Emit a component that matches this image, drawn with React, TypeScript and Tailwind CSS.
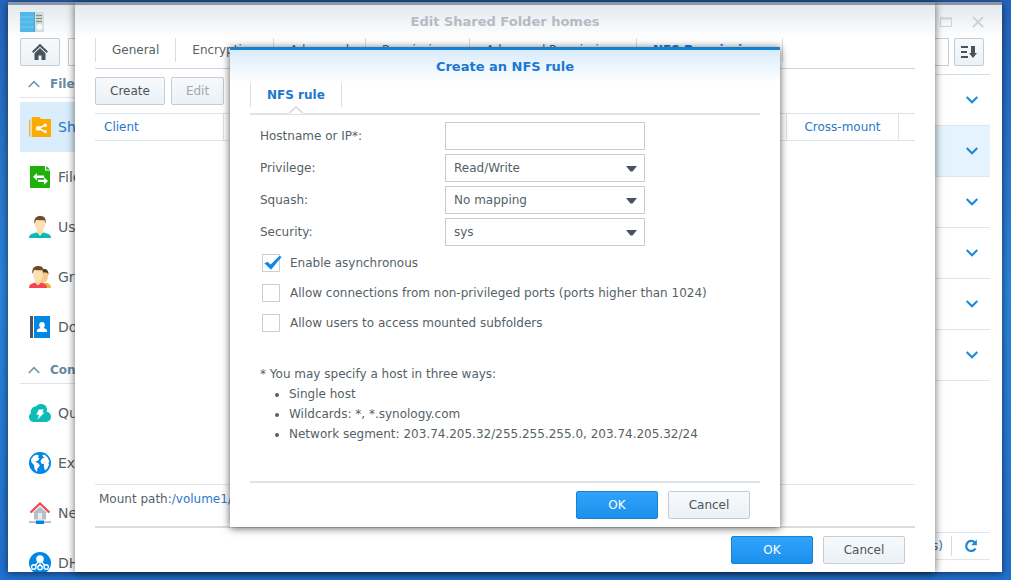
import { useState } from 'react'
import type { ReactNode } from 'react'
import clsx from 'clsx'

const ShareIcon = () => (
  <svg width="22" height="22" viewBox="0 0 22 22">
    <path d="M0 3.500h1.400v17H0z" fill="#fbb116" />
    <path d="M2.800 1h7.700l1.500 2h10v18H2.800z" fill="#fbab00" />
    <path d="M17 8.800 9.400 12.400 17 16" fill="none" stroke="#fff" strokeWidth="1.500" />
    <circle cx="9.200" cy="12.400" r="2.400" fill="#fff" />
    <circle cx="16.200" cy="9.200" r="1.700" fill="#fff" />
    <circle cx="16.200" cy="15.600" r="1.700" fill="#fff" />
  </svg>
)

const FileIcon = () => (
  <svg width="22" height="22" viewBox="0 0 22 22">
    <path d="M1 0h15v4.600h5V22H1z" fill="#1fb00b" />
    <path d="M17.200 0 21 3.600h-3.800z" fill="#1fb00b" />
    <path d="M4 10.800 8 7v2.600h7v2.400H8v2.600zM19 15l-4-3.800v2.600H9V16h6v2.800z" fill="#fff" />
  </svg>
)

const UserIcon = () => (
  <svg width="22" height="22" viewBox="0 0 22 22">
    <path d="M0 22c0-3 2-4.400 7.500-5.500h7C20 17.600 22 19 22 22z" fill="#09bdb7" />
    <path d="M8 12h6v4.500l-3 3.500-3-3.500z" fill="#f9d9a8" />
    <path d="M6.200 4h9.600v4.500c0 4-2 6.500-4.800 6.500s-4.800-2.500-4.800-6.500z" fill="#fbe0b4" />
    <path d="M5.500 8C4.600 2.500 7 0 11.500 0 16 0 17.400 3 16.500 8l-1-3.800c-2.500.4-6-.2-8.500-.2z" fill="#6f4a2b" />
  </svg>
)

const GroupIcon = () => (
  <svg width="22" height="22" viewBox="0 0 22 22">
    <path d="M14 17h4.500c2 .8 3.500 2 3.500 5h-6z" fill="#efb33c" />
    <path d="M12 6h7v5c0 3-2 5-4 5.500V18h-3z" fill="#f6c98c" />
    <path d="M12 4c3-2 8-1.500 7.500 5l-1.300-2.300L13 6z" fill="#4d3826" />
    <path d="M0 22c0-3 1.500-4.400 6.500-5.500h5C16.500 17.600 18 19 18 22z" fill="#f24750" />
    <path d="M6 12h6v4.500l-3 3-3-3z" fill="#f9d9a8" />
    <path d="M4.200 4h9.600v4.500c0 4-2 6.500-4.800 6.500s-4.800-2.500-4.800-6.500z" fill="#fbe0b4" />
    <path d="M3.500 8C2.600 2.500 5 0 9.500 0 14 0 15.400 3 14.500 8l-1-3.800C11 4.600 7.500 4 5 4z" fill="#6f4a2b" />
  </svg>
)

const DomainIcon = () => (
  <svg width="22" height="22" viewBox="0 0 22 22">
    <path d="M1 0h3v22H1z" fill="#4b5660" />
    <path d="M5 0h16v22H5z" fill="#0086e5" />
    <path d="M8 16v-1.500c0-1.200 1.500-1.700 3.600-2.400-1-1-1.400-2-1.400-3.200 0-1.700 1-2.900 2.800-2.900s2.800 1.200 2.800 2.900c0 1.200-.4 2.200-1.400 3.200 2.100.7 3.600 1.200 3.600 2.400V16z" fill="#fff" />
  </svg>
)

const QuickConnectIcon = () => (
  <svg width="22" height="22" viewBox="0 0 22 22">
    <path d="M5 20a5 5 0 0 1-3.200-8.800C1.200 7 4 4.600 7 4.600 8 2.800 10 2 12 2c3.600 0 6 2.200 6 5.600 0 .8-.2 1.500-.4 2C20.500 10.200 22 12.300 22 14.800 22 17.800 19.800 20 17 20z" fill="#0cbcb5" />
    <path d="M9.800 7.500h5l-1.600 3h2.300l-7 7 1.600-4.700H7.200z" fill="#fff" />
  </svg>
)

const GlobeIcon = () => (
  <svg width="22" height="22" viewBox="0 0 22 22">
    <circle cx="11" cy="11" r="11" fill="#0086e5" />
    <path d="M2 7.500 4.500 4l3-1.500 2.500 1-1 2 1.500 1.300L8.500 9 6 9.500l3.500 2 1.500 2-2.500 3L8 20l-2.500-3-.5-4-2.500-2.500z" fill="#fff" />
    <path d="M13 3.500 15.500 2.500l3.300 3.200 1.700 4.300-1.200.8.800 1.700-1.800 4L16 18.500l-1.200-4 .3-2.300-2.800-.7-.9-2.500 2-2.800 2-.5z" fill="#fff" />
  </svg>
)

const NetworkIcon = () => (
  <svg width="22" height="22" viewBox="0 0 22 22">
    <path d="M11 4.500 18.500 11H17v6.500H5V11H3.500z" fill="#b9bfc6" />
    <path d="M9 11h4v6.500H9z" fill="#e9edf0" />
    <path d="M1.500 10.500 11 1.500l9.500 9" fill="none" stroke="#f24750" strokeWidth="2.200" />
    <path d="M0 19.500h22v1.200H0z" fill="#8e979f" />
    <path d="M7 18.500h8V22H7z" fill="#0086e5" />
  </svg>
)

const DhcpIcon = () => (
  <svg width="22" height="22" viewBox="0 0 22 22">
    <circle cx="11" cy="11" r="11" fill="#0086e5" />
    <circle cx="11" cy="7" r="3.800" fill="#fff" />
    <path d="M11 9v6M10 9l-5 6M12 9l5 6" stroke="#fff" strokeWidth="1.200" />
    <g fill="#0086e5" stroke="#fff" strokeWidth="1.400">
      <circle cx="4.800" cy="15" r="2.200" />
      <circle cx="11" cy="15.500" r="2.200" />
      <circle cx="17.200" cy="15" r="2.200" />
    </g>
  </svg>
)

const Chevron = ({ up }: { up?: boolean }) => (
  <svg width="12" height="8" viewBox="0 0 12 8" fill="none" strokeWidth={up ? 1.6 : 2} stroke={up ? '#7595ad' : '#1b87d6'}>
    <path d={up ? 'M0.700 7 6 1.700 11.300 7' : 'M0.700 1 6 6.300 11.300 1'} />
  </svg>
)

const sections = [
  {
    title: 'File Sharing',
    items: [
      { label: 'Shared Folder', icon: <ShareIcon />, active: true },
      { label: 'File Services', icon: <FileIcon /> },
      { label: 'User', icon: <UserIcon /> },
      { label: 'Group', icon: <GroupIcon /> },
      { label: 'Domain/LDAP', icon: <DomainIcon /> },
    ],
  },
  {
    title: 'Connectivity',
    items: [
      { label: 'QuickConnect', icon: <QuickConnectIcon /> },
      { label: 'External Access', icon: <GlobeIcon /> },
      { label: 'Network', icon: <NetworkIcon /> },
      { label: 'DHCP Server', icon: <DhcpIcon /> },
    ],
  },
]

const folders = ['docker', 'homes', 'music', 'photo', 'video', 'web']

const tabs = ['General', 'Encryption', 'Advanced', 'Permissions', 'Advanced Permissions', 'NFS Permissions']

function Button({ variant = 'secondary', className, disabled, children }: {
  variant?: 'primary' | 'secondary'
  className?: string
  disabled?: boolean
  children: ReactNode
}) {
  return (
    <button
      type="button"
      disabled={disabled}
      className={clsx(
        'h-7 shrink-0 rounded-xs border text-xs',
        variant === 'primary'
          ? 'border-[#1a80d0] bg-linear-to-b from-[#30a4fc] to-[#1a90ec] text-white'
          : 'border-[#c4ccd6] bg-linear-to-b from-[#f7fafc] to-[#ebf1f6]',
        disabled ? 'text-[#a0a8b2]' : variant === 'secondary' && 'text-[#4a545e]',
        className,
      )}
    >
      {children}
    </button>
  )
}

function SelectRow({ id, label, options }: { id: string; label: string; options: string[] }) {
  return (
    <div className="flex h-7">
      <label htmlFor={id} className="w-[185px] shrink-0 leading-7">{label}</label>
      <div className="relative w-[200px]">
        <select id={id} className="h-7 w-full appearance-none border border-[#c9cdd3] bg-white px-2 text-xs">
          {options.map(o => <option key={o}>{o}</option>)}
        </select>
        <svg className="pointer-events-none absolute top-3 right-2" width="11" height="6" viewBox="0 0 11 6">
          <path d="M0 0h11L6.500 5.500h-2z" fill="#48535e" />
        </svg>
      </div>
    </div>
  )
}

function CheckRow({ label, defaultChecked }: { label: string; defaultChecked?: boolean }) {
  const [checked, setChecked] = useState(!!defaultChecked)
  return (
    <label className="flex h-[30px] items-center gap-[10px] pl-[2px]">
      <span className="relative flex">
        <input
          type="checkbox"
          checked={checked}
          onChange={e => setChecked(e.target.checked)}
          className="size-[18px] appearance-none border border-[#c6cfda] bg-white"
        />
        {checked && (
          <svg className="pointer-events-none absolute top-0 left-0.5" width="18" height="18" viewBox="0 0 18 18">
            <path d="M0.300 9.200 3.600 7.800l3 2.600L15.300 2l2.500.8L7 15.800z" fill="#1489e4" />
          </svg>
        )}
      </span>
      {label}
    </label>
  )
}

function ControlPanel() {
  return (
    <section className="absolute top-0.5 right-[9px] bottom-2 left-2 flex flex-col overflow-hidden border-t-3 border-[#8c96a3] bg-white shadow-[0_1px_8px_rgba(0,0,0,0.6)]">
      <header className="flex h-[33px] shrink-0 items-center justify-between bg-linear-to-b from-[#e4e9ee] to-white pr-[18px] pl-3">
        <svg width="24" height="20" viewBox="0 0 24 20">
          <path d="M0 0h14v20H0z" fill="#52b8ea" />
          <path d="M0 5h14M0 10h14M0 15h14" stroke="#6cc7f2" />
          <path d="M14 0h10v20H14z" fill="#d5dde2" />
          <path d="M14 0h1v20h-1z" fill="#4aa5d6" />
          <path d="M16 3.500h6M16 6.500h6M16 9.500h6" stroke="#718791" />
          <path d="M17 2.500h2v2h-2zM20 5.500h2v2h-2zM17 8.500h2v2h-2z" fill="#8fb562" />
          <circle cx="19.500" cy="15" r="3" fill="#f7fafb" />
        </svg>
        <svg width="44" height="12" viewBox="0 0 44 12" fill="none" stroke="#ced2d6">
          <path d="M0.500 2h11v8.500h-11z" />
          <path d="M0 2.500h12" strokeWidth="2" />
          <path d="M33 1l10 10M43 1 33 11" strokeWidth="1.800" />
        </svg>
      </header>

      <div className="flex h-7 shrink-0 pr-[18px] pl-3">
        <button type="button" aria-label="Home" className="mr-2 flex w-10 items-center justify-center rounded-xs border border-[#c4ccd6] bg-linear-to-b from-[#f7fafc] to-[#ebf1f6]">
          <svg width="16" height="16" viewBox="0 0 16 16">
            <path d="M0.700 8.200 8 1.200l7.300 7" fill="none" stroke="#48535e" strokeWidth="2" />
            <path d="M2.500 9.300 8 4l5.500 5.300V16h-4v-4.500h-3V16h-4z" fill="#48535e" />
          </svg>
        </button>
        <input aria-label="Search" className="mr-[5px] min-w-0 flex-1 border border-[#c6ccd4]" />
        <button type="button" aria-label="Sort" className="flex w-[30px] items-center justify-center rounded-xs border border-[#c4ccd6] bg-linear-to-b from-[#f7fafc] to-[#ebf1f6]">
          <svg width="16" height="12" viewBox="0 0 16 12" fill="#48535e">
            <path d="M0 0h7v2H0zM0 5h6v2H0zM0 10h7v2H0zM10 0h4v7h2l-4 5-4-5h2z" />
          </svg>
        </button>
      </div>

      <div className="flex min-h-0 flex-1 px-3">
        <nav className="w-[220px] shrink-0 overflow-hidden">
          {sections.map(section => (
            <div key={section.title}>
              <h2 className="mb-1 flex h-8 items-center gap-[10px] border-b border-[#dfe5ea] pt-1 pl-2 text-xs font-bold text-[#6688a3]">
                <Chevron up />
                {section.title}
              </h2>
              {section.items.map(item => (
                <a
                  key={item.label}
                  href="#"
                  className={clsx('flex h-[50px] items-center gap-[7px] pl-[9px] text-sm', item.active && 'bg-[#d9edfc] text-[#2a78cc]')}
                >
                  {item.icon}
                  {item.label}
                </a>
              ))}
            </div>
          ))}
        </nav>

        <div className="flex min-w-0 flex-1 flex-col pt-2 pb-3">
          <div className="flex-1 border-t border-[#d3dde6]">
            {folders.map(name => (
              <button
                key={name}
                type="button"
                aria-label={`Expand ${name}`}
                className={clsx('flex h-[51px] w-full items-center justify-end border-b border-[#dfe5ea] pr-3', name === 'homes' && 'bg-[#e4f3fe]')}
              >
                <Chevron />
              </button>
            ))}
          </div>
          <footer className="flex h-7 shrink-0 items-center justify-end border-y border-[#dfe5ea] text-[#3d6ea8]">
            <span className="pr-2">6 item(s)</span>
            <button type="button" aria-label="Refresh" className="flex h-5 w-[39px] items-center justify-center border-l border-[#d3dde6]">
              <svg width="14" height="14" viewBox="0 0 14 14">
                <path d="M11.500 9.500A5 5 0 1 1 10.800 3.500" fill="none" stroke="#1b87d6" strokeWidth="2.200" />
                <path d="M12.800 0.500v5.700H7.200z" fill="#1b87d6" />
              </svg>
            </button>
          </footer>
        </div>
      </div>
    </section>
  )
}

function SharedFolderDialog() {
  return (
    <section className="absolute top-0.5 right-[76px] bottom-2 left-[75px] flex flex-col border-t-3 border-[#8c96a3] bg-white px-5 shadow-[0_1px_8px_rgba(0,0,0,0.6)]">
      <header className="-mx-5 flex h-[33px] shrink-0 items-center justify-center bg-linear-to-b from-[#e4e9ee] to-white text-[13px] font-bold text-[#b4bbc3]">
        Edit Shared Folder homes
      </header>

      <div role="tablist" className="flex h-[31px] shrink-0 border-b border-[#cdd2d8] pb-1.5">
        {tabs.map(tab => (
          <button
            key={tab}
            type="button"
            role="tab"
            aria-selected={tab === 'NFS Permissions'}
            className={clsx('border-l border-[#d8dde2] px-4 whitespace-nowrap last:border-r', tab === 'NFS Permissions' && 'font-bold text-[#1a78d0]')}
          >
            {tab}
          </button>
        ))}
      </div>

      <div className="flex shrink-0 gap-1.5 py-2">
        <Button className="w-[70px]">Create</Button>
        <Button className="w-[53px]" disabled>Edit</Button>
      </div>

      <div className="flex-1">
        <table className="w-full table-fixed border-separate border-spacing-0 text-[#2a78cc]">
          <thead>
            <tr className="h-7 [&>th]:border-y [&>th]:border-[#d9e4ec] [&>th]:font-normal">
              <th className="w-[129px] border-r pl-[9px] text-left">Client</th>
              <th className="border-r">Privilege</th>
              <th className="border-r">Squash</th>
              <th className="w-[112px] border-r">Cross-mount</th>
              <td className="w-4 border-y border-[#d9e4ec]" />
            </tr>
          </thead>
        </table>
      </div>

      <p className="h-11 shrink-0 border-t border-b-2 border-t-[#e2e6ea] border-b-[#dadcdf] pl-1 leading-7">
        Mount path:<span className="text-[#2a78cc]">/volume1/homes</span>
      </p>
      <footer className="flex shrink-0 justify-end gap-[10px] py-2 pr-[10px]">
        <Button variant="primary" className="w-[82px]">OK</Button>
        <Button className="w-[82px]">Cancel</Button>
      </footer>

      <NfsRuleDialog />
    </section>
  )
}

function NfsRuleDialog() {
  return (
    <section className="absolute inset-x-[155px] top-[42px] flex flex-col border-t-3 border-[#1580d2] bg-white px-5 shadow-[0_1px_8px_rgba(0,0,0,0.65)]">
      <header className="-mx-5 flex h-[33px] items-center justify-center bg-linear-to-b from-[#d9ecfb] to-white text-[13px] font-bold text-[#1a78d0]">
        Create an NFS rule
      </header>

      <div role="tablist" className="flex h-8 border-b-2 border-[#dfe1e3] pb-1.5">
        <button type="button" role="tab" aria-selected className="relative border-x border-[#d8dde2] px-4 font-bold text-[#1a78d0]">
          NFS rule
          <svg className="absolute -bottom-[7px] left-1/2 -ml-[7px]" width="14" height="8" viewBox="0 0 14 8">
            <path d="M0.500 7 7 1l6.500 6v1H0.500z" fill="#fff" />
            <path d="M0.500 7 7 1l6.500 6" fill="none" stroke="#d3d7da" strokeWidth="1.500" />
          </svg>
        </button>
      </div>

      <form className="px-[10px] pt-[7px]">
        <div className="flex flex-col gap-1">
          <div className="flex h-7">
            <label htmlFor="host" className="w-[185px] shrink-0 leading-7">Hostname or IP*:</label>
            <input id="host" className="w-[200px] border border-[#c9cdd3] bg-white px-2 text-xs" />
          </div>
          <SelectRow id="privilege" label="Privilege:" options={['Read/Write', 'Read-only']} />
          <SelectRow id="squash" label="Squash:" options={['No mapping', 'Map root to admin']} />
          <SelectRow id="security" label="Security:" options={['sys', 'krb5']} />
        </div>

        <div className="pt-0.5">
          <CheckRow label="Enable asynchronous" defaultChecked />
          <CheckRow label="Allow connections from non-privileged ports (ports higher than 1024)" />
          <CheckRow label="Allow users to access mounted subfolders" />
        </div>

        <div className="pt-[26px] leading-5">
          <p>* You may specify a host in three ways:</p>
          <ul className="list-disc pl-[29px]">
            <li>Single host</li>
            <li>Wildcards: *, *.synology.com</li>
            <li>Network segment: 203.74.205.32/255.255.255.0, 203.74.205.32/24</li>
          </ul>
        </div>
      </form>

      <footer className="mt-[37px] flex justify-end gap-[10px] border-t-2 border-[#dfe1e3] pt-2 pr-[10px] pb-2">
        <Button variant="primary" className="w-[82px]">OK</Button>
        <Button className="w-[82px]">Cancel</Button>
      </footer>
    </section>
  )
}

export default function App() {
  return (
    <main className="relative h-screen overflow-hidden bg-linear-to-b from-[#2565bd] via-[#2b84da] to-[#2270cf] font-['DejaVu_Sans',Verdana,sans-serif] text-xs text-[#565f68]">
      <ControlPanel />
      <SharedFolderDialog />
    </main>
  )
}
